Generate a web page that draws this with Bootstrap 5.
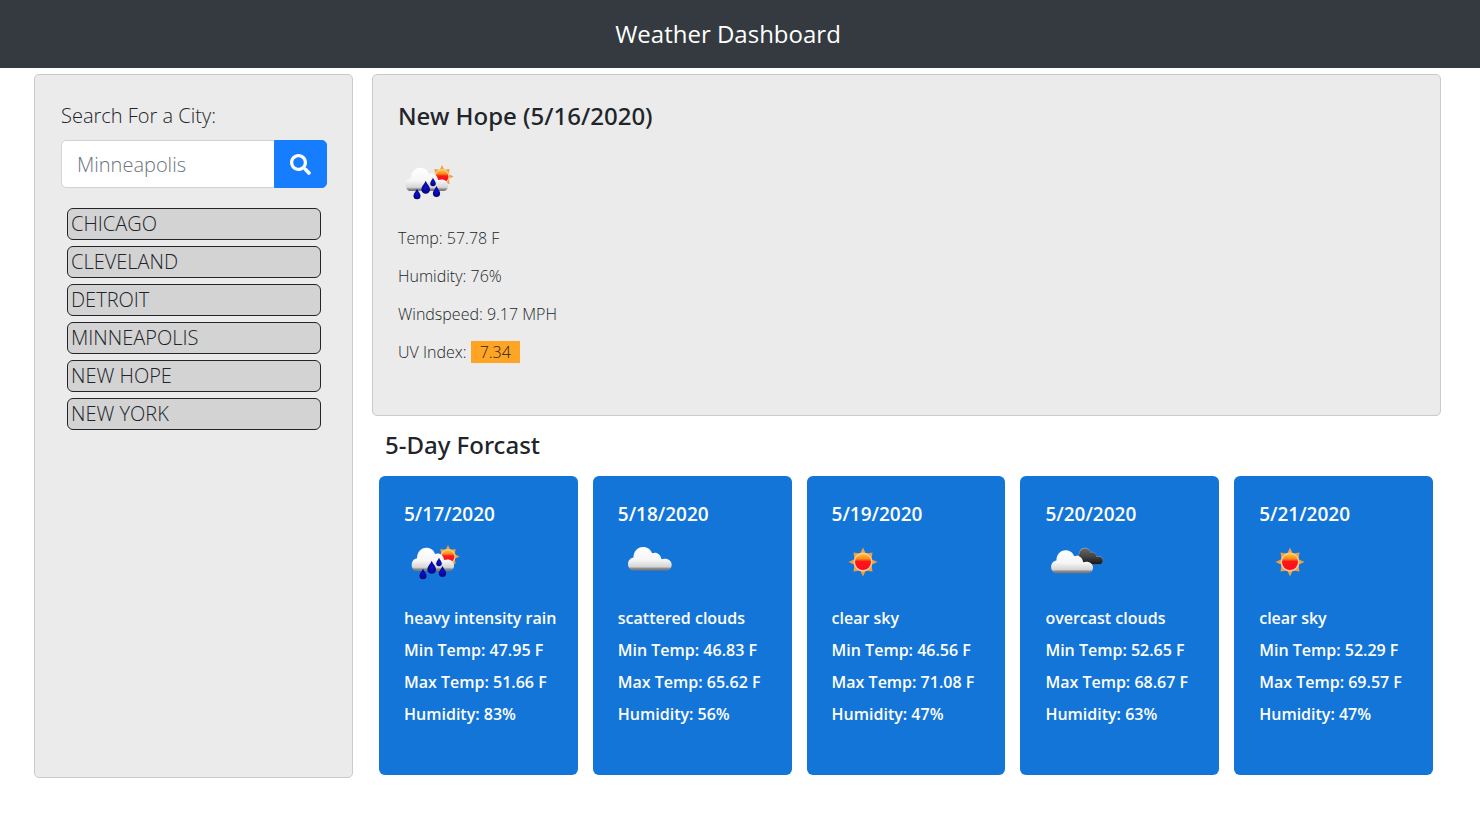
<!DOCTYPE html>
<html lang="en">
<head>
<meta charset="utf-8">
<meta name="viewport" content="width=device-width, initial-scale=1">
<title>Weather Dashboard</title>
<link rel="stylesheet" href="https://cdn.jsdelivr.net/npm/bootstrap@5.3.0/dist/css/bootstrap.min.css">
<style>
  body { font-family: "Open Sans", "Noto Sans", sans-serif; color: #212529; }
  .topbar { background: #343a40; padding: 18px 24px 18px 0; }
  .topbar h1 { font-size: 24px; line-height: 32px; font-weight: 400; color: #fff; }
  .dash { padding: 6px 39px 24px 34px; }
  .panel { background: #ebebeb; border: 1px solid #c9cacb; border-radius: 5px; padding: 26px 25px; }
  .search-panel { padding-left: 26px; }
  .search-label { font-size: 20px; line-height: 30px; font-weight: 300; margin-bottom: 9px; }
  .search-box .form-control { height: 48px; padding: 0 15px; font-size: 20px; font-weight: 300; border-color: #ced4da; border-radius: 5px; }
  .search-box .form-control::placeholder { color: #6c757d; }
  .search-box .btn { width: 53px; padding: 0; background: #177dff; border-color: #177dff; border-radius: 5px; }
  .cities { padding: 20px 6px 0; gap: 6px; }
  .city { width: 100%; text-align: left; background: #d3d3d3; border: 1px solid #212529; border-radius: 6px; padding: 0 3px; font-size: 20px; line-height: 30px; font-weight: 300; color: #212529; }
  .heading { font-family: "Noto Sans", "Open Sans", sans-serif; font-size: 24px; line-height: 30px; font-weight: 500; }
  .weather-icon { width: 62px; height: 62px; display: block; }
  .current { min-height: 342px; }
  .current .weather-icon { margin: 20px 0 14px; }
  .stats { gap: 16px; font-size: 16px; line-height: 22px; font-weight: 300; }
  .uv { background: #ffa423; padding: 0 9px; display: inline-block; }
  .forecast { padding: 14px 8px 3px 7px; }
  .forecast .heading { margin: 0 0 16px 6px; }
  .days { gap: 15px; }
  .day { flex: 1 1 0; min-width: 0; background: #1375d8; color: #fff; border-radius: 6px; padding: 25px 25px 51px; font-size: 16px; line-height: 20px; font-weight: 600; }
  .day h3 { font-size: 19px; line-height: 26px; font-weight: 600; margin: 0 0 4px; }
  .day ul { gap: 12px; margin-top: 15px; white-space: nowrap; }
  @media (min-width: 992px) {
    .dash { display: grid; grid-template-columns: 319fr 1069fr; gap: 19px; }
  }
</style>
<script src="https://cdn.jsdelivr.net/npm/bootstrap@5.3.0/dist/js/bootstrap.bundle.min.js"></script>
</head>
<body>
<svg width="0" height="0" class="position-absolute" aria-hidden="true">
  <defs>
    <linearGradient id="cloudFill" x1="0" y1="0" x2="0" y2="1">
      <stop offset="0" stop-color="#fff"/><stop offset=".55" stop-color="#f6f6f6"/><stop offset=".84" stop-color="#d5d5d5"/><stop offset=".92" stop-color="#888"/><stop offset="1" stop-color="#777"/>
    </linearGradient>
    <linearGradient id="darkFill" x1="0" y1="0" x2="0" y2="1">
      <stop offset="0" stop-color="#666"/><stop offset=".5" stop-color="#444"/><stop offset="1" stop-color="#151515"/>
    </linearGradient>
    <linearGradient id="sunFill" x1="0" y1="0" x2="0" y2="1">
      <stop offset="0" stop-color="#ffc52e"/><stop offset=".3" stop-color="#ff8a1c"/><stop offset=".46" stop-color="#fb1818"/><stop offset="1" stop-color="#ff0a1e"/>
    </linearGradient>
    <radialGradient id="dropFill"><stop offset="0" stop-color="#1010d8"/><stop offset="1" stop-color="#04047c"/></radialGradient>
    <symbol id="sunShape" viewBox="-15 -15 30 30" overflow="visible">
      <path fill="#f0a040" d="M0-14.500L2.800-8.500L9.500-9.500L8.500-2.800L14.500 0L8.500 2.800L9.500 9.500L2.800 8.500L0 14.500L-2.800 8.500L-9.500 9.500L-8.500 2.800L-14.500 0L-8.500-2.800L-9.500-9.500L-2.800-8.500Z"/>
      <circle r="9.400" fill="#f7cf9e"/><circle r="8" fill="url(#sunFill)"/>
    </symbol>
    <path id="cloudShape" d="M15 39.500C12 39.500 10 36.500 10 33C10 29.500 12.500 27 15.500 26.500C15.500 20.500 19.500 16 25 16C29.500 16 33 18.500 34 22.300C38 20.500 42.500 22.500 43.500 28.300C49 26.500 54 29.500 53.700 34C53.500 37.500 51.500 39.500 49 39.500Z"/>
    <path id="dropShape" d="M0-6.500C1-3.500 4.300-1 4.300 2.200A4.300 4.300 0 0 1-4.300 2.200C-4.300-1-1-3.500 0-6.500Z" fill="url(#dropFill)"/>
    <symbol id="rain" viewBox="0 0 62 62">
      <use href="#sunShape" x="32" y="13.500" width="24" height="24"/>
      <use href="#cloudShape" fill="url(#cloudFill)" transform="translate(-2 1) scale(.97 .99)"/>
      <use href="#dropShape" transform="translate(19 43) scale(.82)"/>
      <use href="#dropShape" transform="translate(27.700 36.300)"/>
      <use href="#dropShape" transform="translate(35 31) scale(.65)"/>
      <use href="#dropShape" transform="translate(38.500 40.500) scale(.85)"/>
    </symbol>
    <symbol id="cloud" viewBox="0 0 62 62"><use href="#cloudShape" fill="url(#cloudFill)"/></symbol>
    <symbol id="sun" viewBox="0 0 62 62"><use href="#sunShape" x="16" y="16" width="30" height="30"/></symbol>
    <symbol id="overcast" viewBox="0 0 62 62">
      <use href="#cloudShape" fill="#a5a8aa" transform="translate(24 5.500) scale(.63 .7)"/>
      <use href="#cloudShape" fill="url(#darkFill)" transform="translate(24.500 6.500) scale(.62 .68)"/>
      <use href="#cloudShape" fill="url(#cloudFill)" transform="translate(-3.500 3.500) scale(.96 .98)"/>
    </symbol>
  </defs>
</svg>

<header class="topbar text-center"><h1 class="m-0">Weather Dashboard</h1></header>

<main class="dash">
  <aside class="panel search-panel">
    <form onsubmit="return false">
      <label class="search-label d-block" for="city">Search For a City:</label>
      <div class="input-group search-box">
        <input id="city" type="text" class="form-control" placeholder="Minneapolis">
        <button type="submit" class="btn btn-primary d-flex align-items-center justify-content-center" aria-label="Search">
          <svg width="21" height="21" viewBox="0 0 512 512" fill="#fff" aria-hidden="true"><path d="M505 442.700L405.300 343c-4.500-4.500-10.600-7-17-7H372c27.600-35.300 44-79.700 44-128C416 93.100 322.900 0 208 0S0 93.100 0 208s93.100 208 208 208c48.300 0 92.700-16.400 128-44v16.300c0 6.400 2.500 12.500 7 17l99.700 99.700c9.400 9.400 24.600 9.400 33.900 0l28.300-28.300c9.400-9.400 9.400-24.600.1-34zM208 336c-70.700 0-128-57.200-128-128 0-70.700 57.200-128 128-128 70.700 0 128 57.200 128 128 0 70.700-57.200 128-128 128z"/></svg>
        </button>
      </div>
    </form>
    <div class="cities d-flex flex-column">
      <button type="button" class="city">CHICAGO</button>
      <button type="button" class="city">CLEVELAND</button>
      <button type="button" class="city">DETROIT</button>
      <button type="button" class="city">MINNEAPOLIS</button>
      <button type="button" class="city">NEW HOPE</button>
      <button type="button" class="city">NEW YORK</button>
    </div>
  </aside>

  <div>
    <section class="panel current">
      <h2 class="heading m-0">New Hope (5/16/2020)</h2>
      <svg class="weather-icon" role="img" aria-label="Rain"><use href="#rain"/></svg>
      <div class="stats d-flex flex-column">
        <div>Temp: 57.78 F</div>
        <div>Humidity: 76%</div>
        <div>Windspeed: 9.17 MPH</div>
        <div>UV Index: <span class="uv">7.34</span></div>
      </div>
    </section>

    <section class="forecast">
      <h2 class="heading">5-Day Forcast</h2>
      <div class="days d-flex">
        <article class="day">
          <h3>5/17/2020</h3>
          <svg class="weather-icon" aria-hidden="true"><use href="#rain"/></svg>
          <ul class="list-unstyled d-flex flex-column mb-0"><li>heavy intensity rain</li><li>Min Temp: 47.95 F</li><li>Max Temp: 51.66 F</li><li>Humidity: 83%</li></ul>
        </article>
        <article class="day">
          <h3>5/18/2020</h3>
          <svg class="weather-icon" aria-hidden="true"><use href="#cloud"/></svg>
          <ul class="list-unstyled d-flex flex-column mb-0"><li>scattered clouds</li><li>Min Temp: 46.83 F</li><li>Max Temp: 65.62 F</li><li>Humidity: 56%</li></ul>
        </article>
        <article class="day">
          <h3>5/19/2020</h3>
          <svg class="weather-icon" aria-hidden="true"><use href="#sun"/></svg>
          <ul class="list-unstyled d-flex flex-column mb-0"><li>clear sky</li><li>Min Temp: 46.56 F</li><li>Max Temp: 71.08 F</li><li>Humidity: 47%</li></ul>
        </article>
        <article class="day">
          <h3>5/20/2020</h3>
          <svg class="weather-icon" aria-hidden="true"><use href="#overcast"/></svg>
          <ul class="list-unstyled d-flex flex-column mb-0"><li>overcast clouds</li><li>Min Temp: 52.65 F</li><li>Max Temp: 68.67 F</li><li>Humidity: 63%</li></ul>
        </article>
        <article class="day">
          <h3>5/21/2020</h3>
          <svg class="weather-icon" aria-hidden="true"><use href="#sun"/></svg>
          <ul class="list-unstyled d-flex flex-column mb-0"><li>clear sky</li><li>Min Temp: 52.29 F</li><li>Max Temp: 69.57 F</li><li>Humidity: 47%</li></ul>
        </article>
      </div>
    </section>
  </div>
</main>
</body>
</html>
